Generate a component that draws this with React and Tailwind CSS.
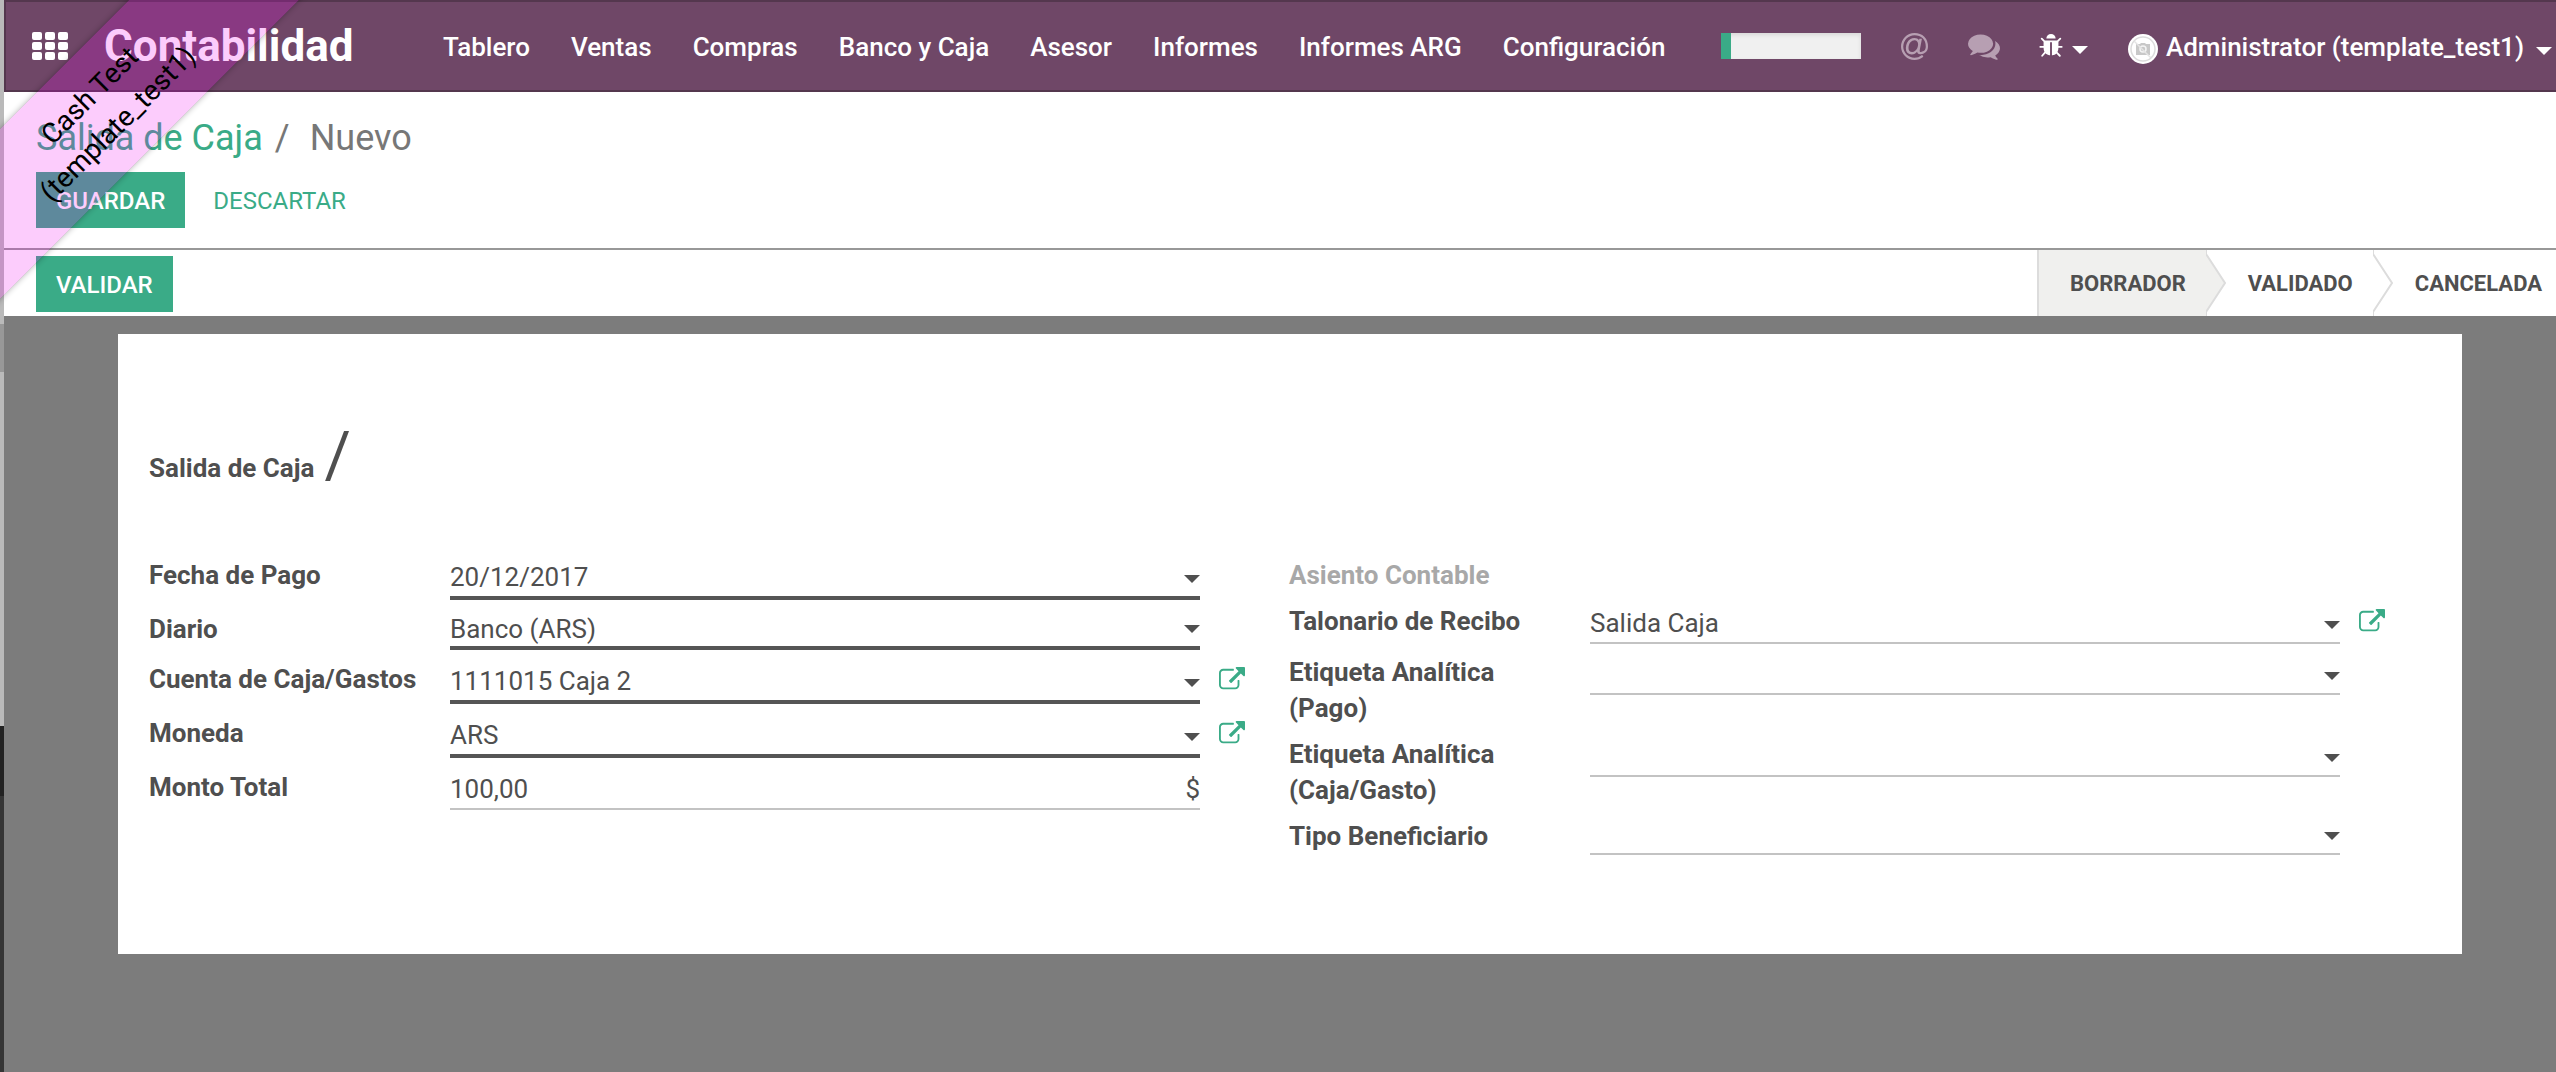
import { useState } from "react";

const MENU = ["Tablero", "Ventas", "Compras", "Banco y Caja", "Asesor", "Informes", "Informes ARG", "Configuración"];

function Caret({ className = "" }) {
  return (
    <svg viewBox="0 0 16 8" className={`h-2 w-4 shrink-0 ${className}`} fill="currentColor" aria-hidden="true">
      <path d="M0 0h16L8 8z" />
    </svg>
  );
}

/* Font Awesome 4 outlines */
function ExternalLink() {
  return (
    <svg viewBox="0 0 1792 1792" className="h-[26px] w-[26px]" fill="currentColor" aria-hidden="true">
      <path d="M1408 928v320q0 119-84.500 203.500t-203.500 84.500h-832q-119 0-203.500-84.500t-84.500-203.500v-832q0-119 84.500-203.500t203.500-84.500h704q14 0 23 9t9 23v64q0 14-9 23t-23 9h-704q-66 0-113 47t-47 113v832q0 66 47 113t113 47h832q66 0 113-47t47-113v-320q0-14 9-23t23-9h64q14 0 23 9t9 23zm384-864v512q0 26-19 45t-45 19-45-19l-176-176-652 652q-10 10-23 10t-23-10l-114-114q-10-10-10-23t10-23l652-652-176-176q-19-19-19-45t19-45 45-19h512q26 0 45 19t19 45z" />
    </svg>
  );
}

function At() {
  return (
    <svg viewBox="0 0 1536 1536" className="h-[27px] w-[27px]" fill="currentColor" aria-hidden="true">
      <path d="M972 647q0-108-53.500-169t-147.500-61q-63 0-124 30.500t-110 84.500-79.500 137-30.500 180q0 112 53.500 173t150.500 61q96 0 176-66.500t122.500-166 42.500-203.500zm564 121q0 111-37 197t-98.500 135-131.500 74.500-145 27.500q-6 0-15.500.5t-16.500.5q-95 0-142-53-28-33-33-83-52 66-131.500 110t-173.500 44q-161 0-249.500-95.500t-88.500-269.500q0-157 66-290t179-210.500 246-77.500q87 0 155 35.500t106 99.500l2-19 11-56q1-6 5.500-12t9.500-6h118q5 0 13 11 5 5 3 16l-120 614q-5 24-5 48 0 39 12.500 52t44.500 13q28-1 57-5.500t73-24 77-50 57-89.500 24-137q0-292-174-466t-466-174q-130 0-248.500 51t-204 136.500-136.500 204-51 248.500 51 248.500 136.500 204 204 136.500 248.500 51q228 0 405-144 11-9 24-8t21 12l41 49q8 12 7 24-2 13-12 22-102 83-227.500 128t-258.500 45q-156 0-298-61t-245-164-164-245-61-298 61-298 164-245 245-164 298-61q344 0 556 212t212 556z" />
    </svg>
  );
}

function Comments() {
  return (
    <svg viewBox="0 0 1792 1792" className="h-8 w-8" fill="currentColor" aria-hidden="true">
      <path d="M1408 768q0 139-94 257t-256.500 186.500-353.500 68.500q-86 0-176-16-124 88-278 128-36 9-86 16h-3q-11 0-20.500-8t-11.500-21q-1-3-1-6.500t.5-6.500 2-6l2.500-5 3.500-5.500 4-5 4.500-5 4-4.500q5-6 23-25t26-29.500 22.500-29 25-38.500 20.500-44q-124-72-195-177t-71-224q0-139 94-257t256.500-186.500 353.500-68.500 353.500 68.500 256.500 186.500 94 257zm384 256q0 120-71 224.500t-195 176.500q10 24 20.500 44t25 38.500 22.500 29 26 29.500 23 25q1 1 4 4.500t4.500 5 4 5 3.500 5.500l2.500 5 2 6 .5 6.500-1 6.500q-3 14-13 22t-22 7q-50-7-86-16-154-40-278-128-90 16-176 16-271 0-472-132 58 4 88 4 161 0 309-45t264-129q125-92 192-212t67-254q0-77-23-152 129 71 204 178t75 230z" />
    </svg>
  );
}

function Bug() {
  return (
    <svg viewBox="0 0 1792 1792" className="h-[26px] w-[26px]" fill="currentColor" aria-hidden="true">
      <path d="M1696 960q0 26-19 45t-45 19h-224q0 171-67 290l208 209q19 19 19 45t-19 45q-18 19-45 19t-45-19l-198-197q-5 5-15 13t-42 28.500-65 36.500-82 29-97 13v-896h-128v896q-51 0-101.500-13.500t-87-33-66-39-43.500-32.500l-15-14-183 207q-20 21-48 21-24 0-43-16-19-18-20.500-44.500t15.500-46.500l202-227q-58-114-58-274h-224q-26 0-45-19t-19-45 19-45 45-19h224v-294l-173-173q-19-19-19-45t19-45 45-19 45 19l173 173h844l173-173q19-19 45-19t45 19 19 45-19 45l-173 173v294h224q26 0 45 19t19 45zm-480-576h-640q0-133 93.500-226.500t226.500-93.500 226.500 93.500 93.500 226.500z" />
    </svg>
  );
}

function Avatar() {
  return (
    <svg viewBox="0 0 30 30" className="mt-1 h-[30px] w-[30px]" aria-hidden="true">
      <circle cx="15" cy="15" r="15" fill="#fff" />
      <circle cx="15" cy="15" r="12" fill="none" stroke="#dcdcdc" strokeWidth="1.500" />
      <path d="M8 10h4l1-1h4l1 1h4v11H8z" fill="#c8c8c8" />
      <circle cx="15" cy="15" r="3" fill="none" stroke="#f4f4f4" strokeWidth="1.500" />
      <path d="M6 7l17 17" stroke="#e4e4e4" strokeWidth="1.500" />
    </svg>
  );
}

function AppsGrid() {
  return (
    <span className="grid grid-cols-3 gap-x-[3px] gap-y-[2px]">
      {Array.from({ length: 9 }, (_, i) => (
        <span key={i} className="h-2 w-[10px] rounded-[2px] bg-white" />
      ))}
    </span>
  );
}

function Row({ id, label, children, link = false, muted = false }) {
  return (
    <div className="flex min-w-0">
      <label htmlFor={id} className={`w-[301px] shrink-0 pr-6 font-bold leading-9 ${muted ? "text-[#a8a8a8]" : ""}`}>
        {label}
      </label>
      <div className="min-w-0 flex-1">{children}</div>
      <div className="flex w-[62px] shrink-0 items-start pt-[6px] pl-[19px]">
        {link && (
          <button type="button" aria-label={`Abrir ${label}`} className="text-[#3aab87]">
            <ExternalLink />
          </button>
        )}
      </div>
    </div>
  );
}

function TextField({ id, value = "", required = false, suffix }) {
  const [text, setText] = useState(value);
  return (
    <div className={`flex w-full items-center ${required ? "h-[43px] border-b-4 border-[#555]" : "h-[41px] border-b-2 border-[#c3c3c3]"}`}>
      <input id={id} type="text" value={text} onChange={(e) => setText(e.target.value)} className="h-full min-w-0 flex-1 bg-transparent outline-none" />
      {suffix ? <span>{suffix}</span> : <Caret className="mt-1" />}
    </div>
  );
}

function SelectField({ id, options, required = false }) {
  return (
    <div className={`flex w-full items-center ${required ? "h-[39px] border-b-4 border-[#555]" : "h-[37px] border-b-2 border-[#c3c3c3]"}`}>
      <select id={id} className="h-full min-w-0 flex-1 appearance-none bg-transparent outline-none">
        {options.map((o) => (
          <option key={o}>{o}</option>
        ))}
      </select>
      <Caret className="pointer-events-none -ml-4" />
    </div>
  );
}

function Chevron({ fill = "#fff" }) {
  return (
    <svg viewBox="0 0 22 66" className="-mr-[22px] h-[66px] w-[22px] shrink-0" aria-hidden="true">
      <path d="M0 0v4l19 29L0 62v4" stroke="#dcdcdc" strokeWidth="2" fill={fill} />
    </svg>
  );
}

export default function App() {
  return (
    <div className="flex min-h-screen overflow-hidden bg-[#7c7c7c] font-['Roboto',sans-serif] text-[26px] leading-9 text-[#4f4f4f]">
      <div className="flex w-1 shrink-0 flex-col">
        <div className="h-[324px] bg-[#bababa]" />
        <div className="h-12 bg-[#989898]" />
        <div className="h-[354px] bg-[#bababa]" />
        <div className="h-[70px] bg-[#222]" />
        <div className="flex-1 bg-[#353535]" />
      </div>

      <div className="relative flex min-w-0 flex-1 flex-col">
        <header className="flex h-[92px] items-center border-2 border-r-0 border-[#54374e] bg-[#6f4767] pr-1 font-medium text-white">
          <button type="button" aria-label="Aplicaciones" className="ml-[26px] shrink-0">
            <AppsGrid />
          </button>
          <h1 className="ml-9 w-[339px] shrink-0 text-[44px] font-bold leading-none">Contabilidad</h1>
          <nav className="flex gap-[41px] pt-[2px] whitespace-nowrap">
            {MENU.map((m) => (
              <a key={m} href="#">{m}</a>
            ))}
          </nav>
          <div className="ml-auto flex shrink-0 items-center whitespace-nowrap">
            <div className="flex h-[26px] w-[140px] bg-[#f0f0f0] shadow-[inset_0_2px_4px_rgba(0,0,0,0.1)]">
              <div className="w-[10px] bg-[#3aab87]" />
            </div>
            <button type="button" aria-label="Menciones" className="ml-10 text-[#b79fb2]"><At /></button>
            <button type="button" aria-label="Conversaciones" className="ml-10 text-[#b79fb2]"><Comments /></button>
            <button type="button" aria-label="Depurar" className="ml-[38px] flex items-center gap-2">
              <Bug />
              <Caret className="mt-2" />
            </button>
            <button type="button" className="ml-10 flex items-center gap-2 pt-[2px]">
              <Avatar />
              Administrator (template_test1)
              <Caret className="mt-2 ml-1" />
            </button>
          </div>
        </header>

        <section className="flex h-[158px] flex-col border-b-2 border-[#989898] bg-white px-8 pt-5">
          <ol className="flex text-[36px] leading-[52px] text-[#777]">
            <li><a href="#" className="text-[#3aab87]">Salida de Caja</a></li>
            <li className="ml-3">/</li>
            <li className="ml-5">Nuevo</li>
          </ol>
          <div className="mt-2 flex gap-2 text-[24px]">
            <button type="button" className="h-14 bg-[#3aab87] px-5 pt-[2px] font-medium text-white">GUARDAR</button>
            <button type="button" className="h-14 px-5 pt-[2px] text-[#3aab87]">DESCARTAR</button>
          </div>
        </section>

        <section className="flex h-[66px] items-end bg-white pl-8 text-[24px]">
          <button type="button" className="mb-1 h-14 bg-[#3aab87] px-5 pt-[2px] font-medium text-white">VALIDAR</button>
          <ol className="ml-auto flex h-full items-center text-[22px] font-bold">
            <li className="flex h-full items-center border-l-2 border-[#dcdcdc] bg-[#f0f0ee] pt-[2px] pr-[20px] pl-[31px]">BORRADOR</li>
            <li className="flex h-full items-center"><Chevron fill="#f0f0ee" /><span className="pt-[2px] pr-5 pl-[42px]">VALIDADO</span></li>
            <li className="flex h-full items-center"><Chevron /><span className="pt-[2px] pr-[14px] pl-[42px]">CANCELADA</span></li>
          </ol>
        </section>

        <main className="pt-[18px] pr-[94px] pl-[114px]">
          <div className="bg-white pt-[86px] pr-[60px] pb-[99px] pl-[31px]">
            <div className="flex items-baseline gap-[10px] leading-[72px]">
              <span className="font-bold">Salida de Caja</span>
              <h2 className="text-[64px]">/</h2>
            </div>
            <div className="mt-[53px] grid grid-cols-2 gap-x-[27px]">
              <div className="flex min-w-0 flex-col gap-[11px]">
                <Row id="fecha" label="Fecha de Pago"><TextField id="fecha" value="20/12/2017" required /></Row>
                <Row id="diario" label="Diario"><SelectField id="diario" options={["Banco (ARS)"]} required /></Row>
                <Row id="cuenta" label="Cuenta de Caja/Gastos" link><TextField id="cuenta" value="1111015 Caja 2" required /></Row>
                <Row id="moneda" label="Moneda" link><TextField id="moneda" value="ARS" required /></Row>
                <Row id="monto" label="Monto Total"><TextField id="monto" value="100,00" suffix="$" /></Row>
              </div>
              <div className="flex min-w-0 flex-col gap-[10px]">
                <Row id="asiento" label="Asiento Contable" muted><output id="asiento" /></Row>
                <Row id="talonario" label="Talonario de Recibo" link><TextField id="talonario" value="Salida Caja" /></Row>
                <Row id="etiqueta-pago" label="Etiqueta Analítica (Pago)"><TextField id="etiqueta-pago" /></Row>
                <Row id="etiqueta-caja" label="Etiqueta Analítica (Caja/Gasto)"><TextField id="etiqueta-caja" /></Row>
                <Row id="tipo" label="Tipo Beneficiario"><SelectField id="tipo" options={[""]} /></Row>
              </div>
            </div>
          </div>
        </main>

        <div className="pointer-events-none absolute top-[50px] -left-[150px] z-20 w-[500px] -rotate-45 bg-[#f000f0]/20 py-5 text-center text-[28px] leading-10 text-black shadow-[0_0_6px_rgba(0,0,0,0.3)]">
          Cash Test
          <br />
          (template_test1)
        </div>
      </div>
    </div>
  );
}
